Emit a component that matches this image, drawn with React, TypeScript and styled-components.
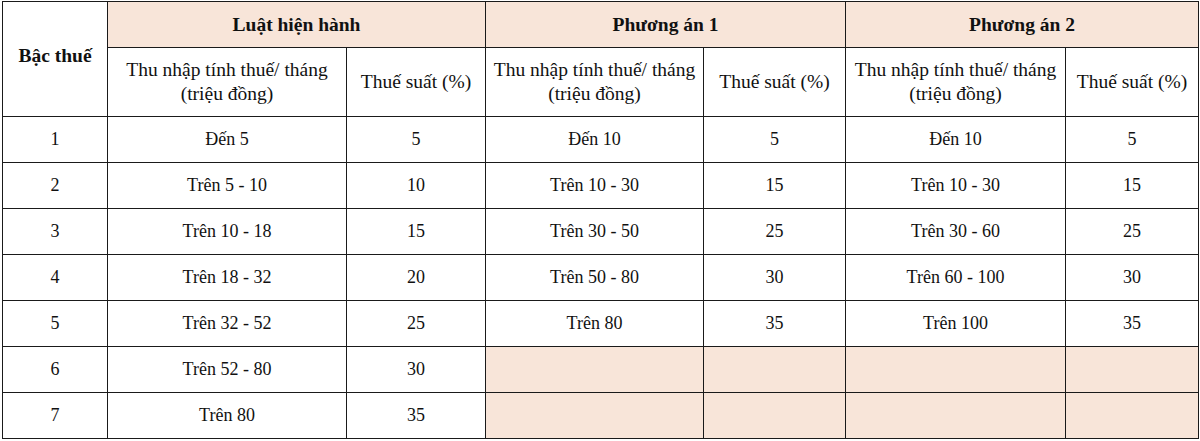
import React from "react";
import styled, { createGlobalStyle } from "styled-components";

const serif = `"Liberation Serif", "Times New Roman", serif`;

const GlobalStyle = createGlobalStyle`
  html, body {
    margin: 0;
    padding: 0;
    background: #ffffff;
  }
  body {
    font-family: ${serif};
    color: #111;
  }
`;

const Wrapper = styled.div`
  padding: 1px 2px 0 2px;
`;

const Table = styled.table`
  border-collapse: collapse;
  table-layout: fixed;
  width: 1196px;
  font-family: ${serif};
  font-size: 18px;
  color: #111;
`;

const HeadCell = styled.th<{ $peach?: boolean; $h: number }>`
  border: 1px solid #1a1a1a;
  height: ${(p) => p.$h}px;
  padding: 0 2px;
  text-align: center;
  vertical-align: middle;
  font-family: ${serif};
  font-size: 19.5px;
  font-weight: ${(p) => (p.$peach ? 700 : 400)};
  background: ${(p) => (p.$peach ? "#f8e5d9" : "#ffffff")};
  line-height: 24px;
`;

const CornerCell = styled.th`
  border: 1px solid #1a1a1a;
  font-family: ${serif};
  font-size: 19.5px;
  font-weight: 700;
  text-align: center;
  vertical-align: middle;
  padding: 0 0 6px 0;
  background: #ffffff;
`;

const Cell = styled.td<{ $empty?: boolean }>`
  border: 1px solid #1a1a1a;
  height: 45px;
  padding: 0 4px;
  text-align: center;
  vertical-align: middle;
  font-family: ${serif};
  font-size: 18px;
  background: ${(p) => (p.$empty ? "#f8e5d9" : "#ffffff")};
`;

const widths = [105, 239, 139, 218, 142, 220, 133];

const rows: (string | null)[][] = [
  ["1", "Đến 5", "5", "Đến 10", "5", "Đến 10", "5"],
  ["2", "Trên 5 - 10", "10", "Trên 10 - 30", "15", "Trên 10 - 30", "15"],
  ["3", "Trên 10 - 18", "15", "Trên 30 - 50", "25", "Trên 30 - 60", "25"],
  ["4", "Trên 18 - 32", "20", "Trên 50 - 80", "30", "Trên 60 - 100", "30"],
  ["5", "Trên 32 - 52", "25", "Trên 80", "35", "Trên 100", "35"],
  ["6", "Trên 52 - 80", "30", null, null, null, null],
  ["7", "Trên 80", "35", null, null, null, null],
];

const groups = ["Luật hiện hành", "Phương án 1", "Phương án 2"];

export default function App() {
  return (
    <Wrapper>
      <GlobalStyle />
      <Table>
        <colgroup>
          {widths.map((w, i) => (
            <col key={i} style={{ width: w }} />
          ))}
        </colgroup>
        <thead>
          <tr>
            <CornerCell rowSpan={2}>Bậc thuế</CornerCell>
            {groups.map((g) => (
              <HeadCell key={g} colSpan={2} $peach $h={45}>
                {g}
              </HeadCell>
            ))}
          </tr>
          <tr>
            {groups.map((g) => (
              <React.Fragment key={g}>
                <HeadCell $h={68}>
                  Thu nhập tính thuế/ tháng
                  <br />
                  (triệu đồng)
                </HeadCell>
                <HeadCell $h={68}>Thuế suất (%)</HeadCell>
              </React.Fragment>
            ))}
          </tr>
        </thead>
        <tbody>
          {rows.map((r, i) => (
            <tr key={i}>
              {r.map((c, j) => (
                <Cell key={j} $empty={c === null}>
                  {c}
                </Cell>
              ))}
            </tr>
          ))}
        </tbody>
      </Table>
    </Wrapper>
  );
}
